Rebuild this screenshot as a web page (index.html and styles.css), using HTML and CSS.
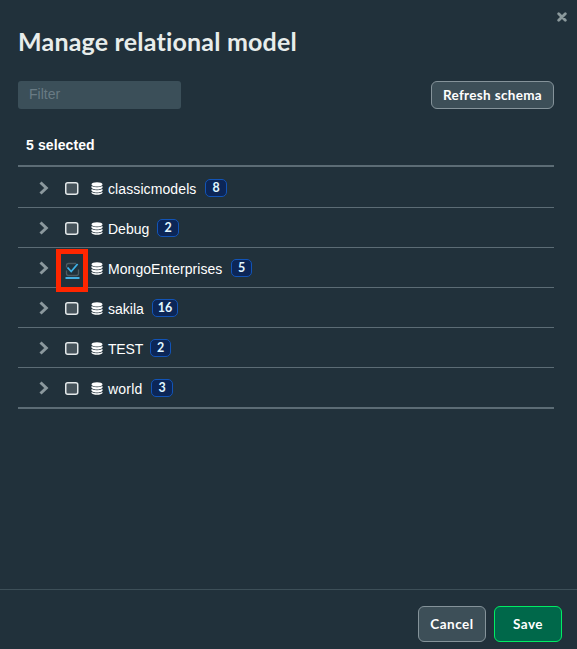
FILE: index.html
```html
<!DOCTYPE html>
<html lang="en">
<head>
<meta charset="utf-8">
<title>Manage relational model</title>
<link rel="stylesheet" href="styles.css">
</head>
<body>
<svg class="defs" aria-hidden="true">
  <symbol id="chevron" viewBox="0 0 10 14"><path d="M1.500 1.500L7.300 7l-5.800 5.500" fill="none" stroke="#8b989d" stroke-width="3"/></symbol>
  <symbol id="database" viewBox="0 0 12 13"><g fill="#fff"><ellipse cx="6" cy="2.400" rx="5.500" ry="2.200"/><path d="M.5 4Q6 6.700 11.500 4v1.800C10 8.200 2 8.200 .5 5.800z"/><path d="M.5 7Q6 9.700 11.500 7v1.800C10 11.200 2 11.200 .5 8.800z"/><path d="M.5 10Q6 12.700 11.500 10v1C10.500 13.400 1.500 13.400 .5 11z"/></g></symbol>
</svg>
<main class="dialog">
  <button class="close" aria-label="Close"><svg width="10" height="10" viewBox="0 0 10 10"><path d="M1.700 1.700l6.600 6.600M8.300 1.700L1.700 8.300" stroke="#8b999c" stroke-width="2.800" stroke-linecap="round"/></svg></button>
  <h1>Manage relational model</h1>
  <div class="toolbar">
    <input class="filter" type="text" placeholder="Filter">
    <button class="btn refresh"><span>Refresh schema</span></button>
  </div>
  <div class="summary">5 selected</div>
  <ul class="schemas">
    <li><svg class="chevron"><use href="#chevron"/></svg><svg class="box"><rect x=".75" y=".75" width="12" height="11.500" rx="2"/></svg><svg class="db"><use href="#database"/></svg><span class="name classic">classicmodels</span><span class="badge">8</span></li>
    <li><svg class="chevron"><use href="#chevron"/></svg><svg class="box"><rect x=".75" y=".75" width="12" height="11.500" rx="2"/></svg><svg class="db"><use href="#database"/></svg><span class="name debug">Debug</span><span class="badge">2</span></li>
    <li><svg class="chevron"><use href="#chevron"/></svg><span class="box"><svg class="check" width="32" height="43" viewBox="0 0 32 43"><path d="M2.500 2.500h27v38h-27z" fill="none" stroke="#ff2600" stroke-width="5"/><path d="M20 14.500h-7.500q-2 0-2 2v2M10.500 21.500v3q0 2 2 2h8q2 0 2-2v-4" fill="none" stroke="#4d5a61" stroke-width="1.300"/><path d="M11.500 18.500l3.700 4 6.400-7.500" fill="none" stroke="#3eb2e8" stroke-width="1.800"/><path d="M9.500 29h14" stroke="#43aee2" stroke-width="2"/></svg></span><svg class="db"><use href="#database"/></svg><span class="name mongo">MongoEnterprises</span><span class="badge narrow">5</span></li>
    <li><svg class="chevron"><use href="#chevron"/></svg><svg class="box"><rect x=".75" y=".75" width="12" height="11.500" rx="2"/></svg><svg class="db"><use href="#database"/></svg><span class="name sakila">sakila</span><span class="badge wide">16</span></li>
    <li><svg class="chevron"><use href="#chevron"/></svg><svg class="box"><rect x=".75" y=".75" width="12" height="11.500" rx="2"/></svg><svg class="db"><use href="#database"/></svg><span class="name test">TEST</span><span class="badge narrow">2</span></li>
    <li><svg class="chevron"><use href="#chevron"/></svg><svg class="box"><rect x=".75" y=".75" width="12" height="11.500" rx="2"/></svg><svg class="db"><use href="#database"/></svg><span class="name world">world</span><span class="badge">3</span></li>
  </ul>
  <footer><button class="btn cancel">Cancel</button><button class="btn save">Save</button></footer>
</main>
</body>
</html>
```

FILE: styles.css
```css
* { box-sizing: border-box; }
body { margin: 0; background: #21313b; color: #fff; font: 14px "Liberation Sans", Arial, sans-serif; }
.defs { display: none; }
.dialog { position: relative; display: flex; flex-direction: column; height: 649px; padding-top: 24px; }
.close { position: absolute; right: 10px; top: 12px; padding: 0; border: 0; background: none; width: 10px; height: 10px; }
.close svg { display: block; }
h1 { margin: 0 18px; font: 700 25px/34px Lato, sans-serif; letter-spacing: .2px; color: #e8edeb; white-space: nowrap; }
.toolbar { display: flex; justify-content: space-between; margin: 23px 23px 0 18px; }
.filter { width: 163px; height: 28px; border: 0; border-radius: 3px; padding: 0 11px 2px; background: #3b4f59; color: #fff; font: 14px "Liberation Sans", Arial, sans-serif; }
.filter::placeholder { color: #697b84; opacity: 1; }
.btn { display: flex; align-items: center; justify-content: center; padding: 0; border: 1px solid #85939a; border-radius: 6px; background: #3d4f58; color: #fff; font: 700 13.5px Lato, sans-serif; white-space: nowrap; }
.refresh { width: 123px; height: 28px; letter-spacing: .33px; }
.summary { margin: 28px 26px 0; height: 28px; line-height: 16px; font-weight: 700; letter-spacing: .1px; }
.schemas { list-style: none; margin: 0 23px 0 18px; padding: 0; border-top: 2px solid #5c6c75; border-bottom: 1px solid #5c6c75; }
.schemas li { display: flex; align-items: center; height: 40px; padding: 1px 0 0 21px; border-bottom: 1px solid #5c6c75; }
.schemas li:first-child { height: 41px; padding-top: 2px; }
.chevron { width: 10px; height: 14px; }
.box { position: relative; width: 14px; height: 13px; margin: 0 12px 0 16px; fill: #46535b; stroke: #e3e8ea; stroke-width: 1.5; }
.check { position: absolute; left: -9.500px; top: -13px; }
.db { width: 12px; height: 13px; flex: none; }
.name { margin: 2px 8px 0 5px; line-height: 16px; white-space: nowrap; }
.classic { width: 89px; letter-spacing: .1px; }
.debug { width: 41px; }
.mongo { width: 115px; letter-spacing: .05px; }
.sakila { width: 36px; }
.test { width: 34px; letter-spacing: -.2px; }
.world { width: 35px; letter-spacing: .2px; }
.badge { display: flex; align-items: center; justify-content: center; width: 22px; height: 18px; padding-bottom: 1px; border: 1px solid #1254b7; border-radius: 5px; background: #0c2657; color: #e1f7ff; font: 700 12.500px Lato, sans-serif; }
.narrow { width: 21px; }
.wide { width: 26px; }
footer { display: flex; justify-content: flex-end; gap: 8px; height: 60px; margin-top: auto; padding: 16px 15px 0 0; border-top: 1px solid #3d4f58; }
footer .btn { width: 68px; height: 36px; letter-spacing: .5px; }
footer .save { background: #00684a; border-color: #00ed64; }
```
